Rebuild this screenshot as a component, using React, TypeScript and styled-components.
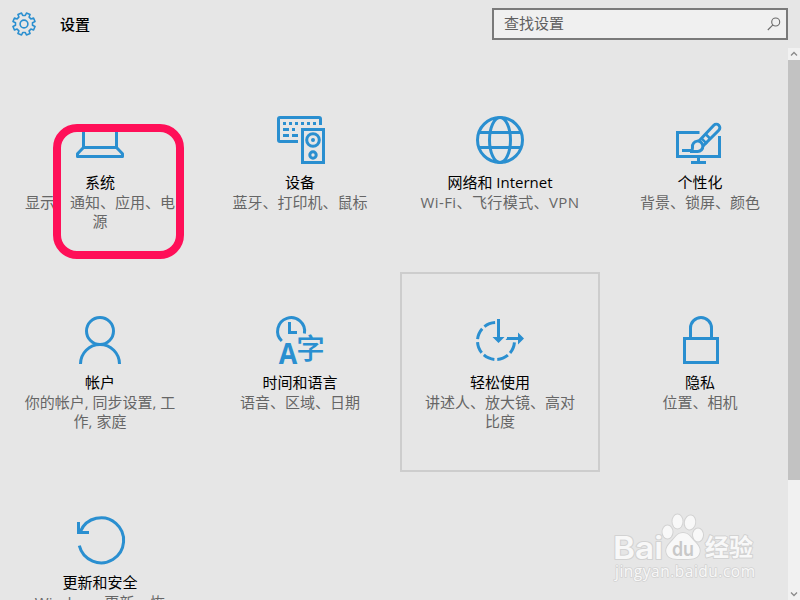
import React from "react";
import styled, { createGlobalStyle } from "styled-components";

const BLUE = "#2a8fd0";

const GlobalStyle = createGlobalStyle`
  * { box-sizing: border-box; }
  html, body { margin: 0; padding: 0; overflow: hidden; background: #e6e6e6; }
  body { font-family: "Open Sans", "Noto Sans CJK SC", sans-serif; font-size: 15px; }
`;

const Window = styled.div`
  position: relative;
  display: flex;
  flex-direction: column;
  width: 800px;
  height: 600px;
  overflow: hidden;
  background: #e6e6e6;
`;

const Header = styled.header`
  display: flex;
  align-items: center;
  flex: none;
  height: 48px;
  padding: 0 12px;
`;

const HeaderTitle = styled.h1`
  margin: 0 0 1px 24px;
  flex: 1;
  font-size: 15px;
  font-weight: 500;
  line-height: 20px;
  color: #000;
`;

const SearchBox = styled.div`
  display: flex;
  align-items: center;
  justify-content: space-between;
  width: 296px;
  height: 32px;
  padding: 0 5px 0 10px;
  border: 2px solid #7a7a7a;
  background: #f0f0f0;
  color: #5f5f5f;
  line-height: 20px;
`;

const SearchHint = styled.span`
  margin-bottom: 2px;
`;

const Body = styled.div`
  display: flex;
  flex: 1;
  min-height: 0;
`;

const Content = styled.main`
  flex: 1;
  min-width: 0;
  padding-top: 24px;
  overflow: hidden;
`;

const Grid = styled.div`
  display: grid;
  grid-template-columns: repeat(4, 200px);
  grid-auto-rows: 200px;
`;

const Tile = styled.section<{ $active?: boolean }>`
  display: flex;
  flex-direction: column;
  align-items: center;
  padding-top: 42px;
  border: 2px solid ${(p) => (p.$active ? "#cdcdcd" : "transparent")};
  text-align: center;
`;

const TileIcon = styled.svg`
  display: block;
  flex: none;
  width: 48px;
  height: 48px;
  overflow: visible;
  fill: none;
  stroke: ${BLUE};
  stroke-width: 3;
`;

const TileTitle = styled.h2`
  margin: 8px 0 0;
  font-size: 15px;
  font-weight: 400;
  line-height: 20px;
  color: #000;
  white-space: nowrap;
`;

const TileText = styled.p<{ $spread?: number }>`
  margin: 1px 0 0;
  line-height: 19px;
  letter-spacing: ${(p) => p.$spread ?? 0}px;
  color: #666;
  white-space: pre;
`;

const ScrollBar = styled.div`
  display: flex;
  flex-direction: column;
  flex: none;
  width: 12px;
  background: #f1f1f1;
`;

const ScrollArrow = styled.svg`
  display: block;
  width: 12px;
  height: 12px;
  fill: none;
  stroke: #8a8a8a;
  stroke-width: 1.3;
`;

const Thumb = styled.div`
  height: 420px;
  margin-bottom: auto;
  background: #c2c2c2;
`;

const Highlight = styled.div`
  position: absolute;
  left: 53px;
  top: 124px;
  width: 131px;
  height: 135px;
  border: 8px solid #ff0f58;
  border-radius: 24px;
`;

const Watermark = styled.svg`
  position: absolute;
  left: 604px;
  top: 508px;
  width: 164px;
  height: 80px;
  fill: #f8f8f8;
  stroke: #d2d2d2;
  stroke-width: 2;
  paint-order: stroke;
  stroke-linejoin: round;
`;

function gearPath() {
  const teeth = 8;
  const step = (Math.PI * 2) / teeth;
  const points: string[] = [];
  for (let i = 0; i < teeth; i++) {
    const mid = -Math.PI / 2 + step * (i + 0.5);
    const corners: [number, number][] = [
      [-0.31, 8.6],
      [-0.22, 11.3],
      [0.22, 11.3],
      [0.31, 8.6],
    ];
    corners.forEach(([offset, r]) => {
      const a = mid + offset * step;
      points.push(`${(12 + r * Math.cos(a)).toFixed(2)} ${(12 + r * Math.sin(a)).toFixed(2)}`);
    });
  }
  return `M${points.join("L")}Z`;
}

const GearIcon = () => (
  <svg width="24" height="24" viewBox="0 0 24 24" fill="none" stroke={BLUE} strokeWidth="1.6" strokeLinejoin="round">
    <path d={gearPath()} />
    <circle cx="12" cy="12" r="3.900" />
  </svg>
);

const SearchIcon = () => (
  <svg width="14" height="14" viewBox="0 0 14 14" fill="none" stroke="#6a6a6a" strokeWidth="1.1">
    <circle cx="8.7" cy="5" r="4" />
    <path d="M5.9 7.9L.8 13" />
  </svg>
);

const LaptopIcon = () => (
  <TileIcon viewBox="0 0 48 48">
    <path d="M7.5 31.5V9.5h33v22M7.5 31.5h33l6 6.2v2.8h-45v-2.8z" strokeLinejoin="round" />
  </TileIcon>
);

const DevicesIcon = () => (
  <TileIcon viewBox="0 0 48 48">
    <path d="M22 25.5H4q-1.5 0-1.5-1.5V3Q2.500 1.500 4 1.500H43q1.500 0 1.500 1.500V9" />
    <path d="M7 7.500H41" strokeDasharray="3 3" />
    <path d="M7 13.500h6M16 13.500h3M7 19.500h6M16 19.500h6" />
    <rect x="26.500" y="13.500" width="21" height="33" />
    <circle cx="37" cy="24" r="6.300" />
    <circle cx="37" cy="24" r="2" fill={BLUE} stroke="none" />
    <circle cx="37" cy="39" r="3.200" />
  </TileIcon>
);

const GlobeIcon = () => (
  <TileIcon viewBox="0 0 48 48">
    <circle cx="24" cy="24" r="22.500" />
    <ellipse cx="24" cy="24" rx="10.500" ry="22.500" />
    <path d="M3 16.500H45M3 31.500H45" />
  </TileIcon>
);

const PersonalizeIcon = () => (
  <TileIcon viewBox="0 0 48 48">
    <path d="M23.500 16.500H1.500v24h42V20M22.500 41v5M15 46.500H30" />
    <path d="M22.500 25.500L37.800 9.200a3.500 3.500 0 0 1 5 5L27 30" />
    <path d="M25.500 22.300l5.500 5.500M29.500 18l5 5" strokeWidth="2.500" />
    <path d="M6 34.500h10q.5-1 .5-3.500a5.200 5.200 0 1 1 5.200 4.500H14" />
  </TileIcon>
);

const AccountIcon = () => (
  <TileIcon viewBox="0 0 48 48">
    <circle cx="24" cy="15" r="13.500" />
    <path d="M4.500 48a19.500 19.500 0 0 1 39 0" />
  </TileIcon>
);

const IconLetter = styled.text`
  fill: ${BLUE};
  stroke: none;
`;

const LanguageIcon = () => (
  <TileIcon viewBox="0 0 48 48">
    <path d="M5.800 25A13.500 13.500 0 1 1 28.400 17.500M13.500 6v10.500H21" />
    <IconLetter x="12" y="48" textAnchor="middle" fontFamily="Open Sans" fontSize="29" fontWeight="700" textLength="18.500" lengthAdjust="spacingAndGlyphs">
      A
    </IconLetter>
    <IconLetter x="34.500" y="42.500" textAnchor="middle" fontFamily="Noto Sans CJK SC" fontSize="28.500" fontWeight="500">
      字
    </IconLetter>
  </TileIcon>
);

const EaseIcon = () => (
  <TileIcon viewBox="0 0 48 48">
    <path d="M38.500 25A18.500 18.500 0 1 1 20 6.500" strokeDasharray="11.530 3" strokeDashoffset="-1.500" />
    <path d="M22.500 3v19M31 22.500H43" />
    <path d="M16.500 21h12l-6 6zM42 16.500v12l6-6zM32 21l-2.500 3h4z" fill={BLUE} stroke="none" />
  </TileIcon>
);

const LockIcon = () => (
  <TileIcon viewBox="0 0 48 48">
    <rect x="8.500" y="22.500" width="33" height="24" />
    <path d="M14.500 22V12a10.500 10.500 0 0 1 21 0v10" />
  </TileIcon>
);

const UpdateIcon = () => (
  <TileIcon viewBox="0 0 48 48">
    <path d="M3.300 29.700A22.500 22.500 0 1 0 4.500 15.300" />
    <path d="M2.500 6v10.500H13" />
  </TileIcon>
);

interface Category {
  title: string;
  text: string;
  Icon: React.FC;
  active?: boolean;
  spread?: number;
}

const categories: Category[] = [
  { title: "系统", text: "显示、通知、应用、电\n源", Icon: LaptopIcon },
  { title: "设备", text: "蓝牙、打印机、鼠标", Icon: DevicesIcon },
  { title: "网络和 Internet", text: "Wi-Fi、飞行模式、VPN", Icon: GlobeIcon, spread: 0.4 },
  { title: "个性化", text: "背景、锁屏、颜色", Icon: PersonalizeIcon },
  { title: "帐户", text: "你的帐户, 同步设置, 工\n作, 家庭", Icon: AccountIcon },
  { title: "时间和语言", text: "语音、区域、日期", Icon: LanguageIcon },
  { title: "轻松使用", text: "讲述人、放大镜、高对\n比度", Icon: EaseIcon, active: true },
  { title: "隐私", text: "位置、相机", Icon: LockIcon },
  { title: "更新和安全", text: "Windows 更新、恢\n复、备份", Icon: UpdateIcon, spread: 0.25 },
];

export default function App() {
  return (
    <Window>
      <GlobalStyle />
      <Header>
        <GearIcon />
        <HeaderTitle>设置</HeaderTitle>
        <SearchBox>
          <SearchHint>查找设置</SearchHint>
          <SearchIcon />
        </SearchBox>
      </Header>
      <Body>
        <Content>
          <Grid>
            {categories.map(({ title, text, Icon, active, spread }) => (
              <Tile key={title} $active={active}>
                <Icon />
                <TileTitle>{title}</TileTitle>
                <TileText $spread={spread}>{text}</TileText>
              </Tile>
            ))}
          </Grid>
        </Content>
        <ScrollBar>
          <ScrollArrow viewBox="0 0 12 12"><path d="M3 7.500l3-3 3 3" /></ScrollArrow>
          <Thumb />
          <ScrollArrow viewBox="0 0 12 12"><path d="M3 4.500l3 3 3-3" /></ScrollArrow>
        </ScrollBar>
      </Body>
      <Highlight />
      <Watermark viewBox="604 508 164 80">
        <text x="613" y="558.500" fontFamily="Inter" fontSize="31" fontWeight="600" textLength="50" lengthAdjust="spacingAndGlyphs">Bai</text>
        <ellipse cx="667.500" cy="532" rx="5" ry="6.500" />
        <ellipse cx="677.500" cy="521.500" rx="5" ry="7" />
        <ellipse cx="690" cy="522.500" rx="5.200" ry="7" transform="rotate(10 690 522.500)" />
        <ellipse cx="698" cy="535" rx="5" ry="6.500" />
        <path d="M683 533c6 0 8 5 12 9 4 4 6 8 4 12-2 5-8 5-16 5s-14 0-16-5c-2-4 0-8 4-12 4-4 6-9 12-9z" />
        <text x="672" y="556" fontFamily="Inter" fontSize="20" fontWeight="600" textLength="22" lengthAdjust="spacingAndGlyphs" fill="#c8c8c8" stroke="none">du</text>
        <text x="705" y="556" fontFamily="Noto Sans CJK SC" fontSize="24" fontWeight="700">经验</text>
        <text x="615" y="577" fontFamily="Open Sans" fontSize="15.500" strokeWidth="1.600" textLength="140">jingyan.baidu.com</text>
      </Watermark>
    </Window>
  );
}
